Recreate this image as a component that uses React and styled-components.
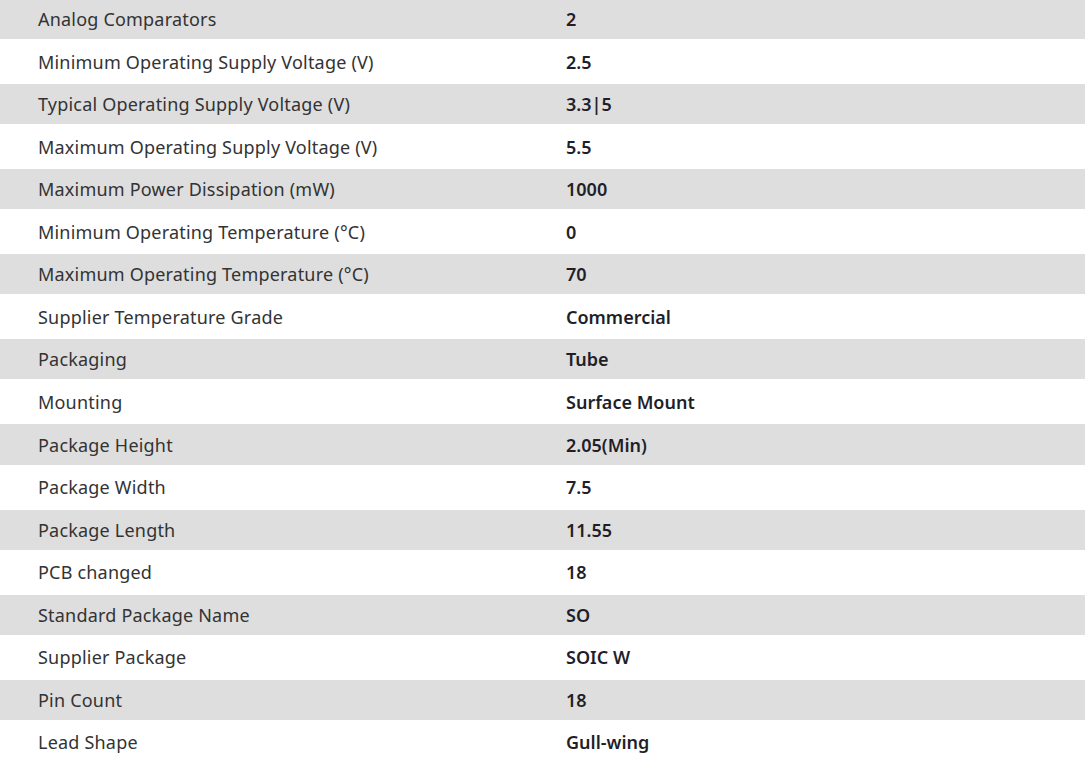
import React from 'react'
import styled, { createGlobalStyle } from 'styled-components'

const GlobalStyle = createGlobalStyle`
  html, body {
    margin: 0;
    padding: 0;
    background: #ffffff;
    overflow: hidden;
  }
`

const specs = [
  ['Analog Comparators', '2'],
  ['Minimum Operating Supply Voltage (V)', '2.5'],
  ['Typical Operating Supply Voltage (V)', '3.3|5'],
  ['Maximum Operating Supply Voltage (V)', '5.5'],
  ['Maximum Power Dissipation (mW)', '1000'],
  ['Minimum Operating Temperature (°C)', '0'],
  ['Maximum Operating Temperature (°C)', '70'],
  ['Supplier Temperature Grade', 'Commercial'],
  ['Packaging', 'Tube'],
  ['Mounting', 'Surface Mount'],
  ['Package Height', '2.05(Min)'],
  ['Package Width', '7.5'],
  ['Package Length', '11.55'],
  ['PCB changed', '18'],
  ['Standard Package Name', 'SO'],
  ['Supplier Package', 'SOIC W'],
  ['Pin Count', '18'],
  ['Lead Shape', 'Gull-wing'],
]

const App = () => {
  return (
    <>
      <GlobalStyle />
      <SpecTable>
        {specs.map(([label, value], i) => (
          <Row key={label} striped={i % 2 === 0 ? 1 : 0}>
            <Label>{label}</Label>
            <Value>{value}</Value>
          </Row>
        ))}
      </SpecTable>
    </>
  )
}

const SpecTable = styled.div`
  display: flex;
  flex-direction: column;
  width: 1085px;
  margin-top: -1px;
  font-family: 'Noto Sans', 'Open Sans', sans-serif;
  font-size: 18px;
`

const Row = styled.div`
  display: grid;
  grid-template-columns: 528px 1fr;
  align-items: center;
  flex-shrink: 0;
  height: ${(p) => (p.striped ? '40.1px' : '45px')};
  background: ${(p) => (p.striped ? '#dedede' : '#ffffff')};
`

const Label = styled.div`
  padding-left: 38px;
  color: #333333;
  font-weight: 400;
  letter-spacing: 0.2px;
`

const Value = styled.div`
  padding-left: 38px;
  color: #1f1f2a;
  font-weight: 600;
`

export default App
